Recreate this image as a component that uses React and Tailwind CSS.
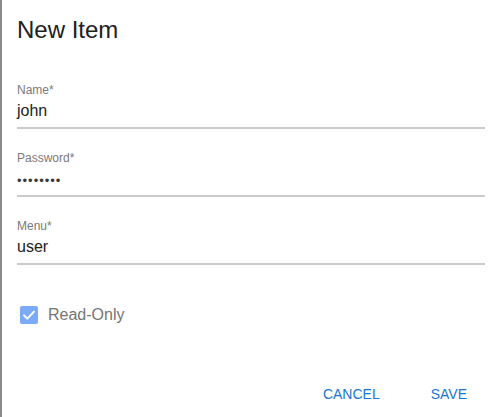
import React from "react";

function Field({ label, value, dots }) {
  return (
    <div className="flex flex-col">
      <div className="h-4 text-[12px] leading-4 text-[#7a7a7a]">{label}</div>
      <div className="mt-[3px] h-5 text-[16px] leading-5 text-[#212121]">
        {dots ? (
          <span className="text-[13px] tracking-[1px] text-[#3a3a3a] relative top-[1px]">••••••••</span>
        ) : (
          value
        )}
      </div>
      <div className="mt-[6px] h-[2px] bg-[#cbcbcb]" />
    </div>
  );
}

export default function App() {
  return (
    <div
      className="w-[499px] h-[417px] bg-white border-l-2 border-[#8a8a8a] flex flex-col pl-[15px] pr-[14px] pt-[16px]"
      style={{ fontFamily: '"Liberation Sans", Arial, Helvetica, sans-serif' }}
    >
      <div className="h-[28px] text-[24px] leading-[28px] text-[#212121]">New Item</div>
      <div className="mt-[38px] flex flex-col gap-[21px]">
        <Field label="Name*" value="john" />
        <Field label="Password*" dots />
        <Field label="Menu*" value="user" />
      </div>
      <div className="mt-[41px] flex items-center pl-[3px] h-[18px]">
        <div className="w-[18px] h-[18px] rounded-[2px] bg-[#7baaf7] flex items-center justify-center">
          <svg width="16" height="16" viewBox="0 0 24 24" fill="none">
            <path d="M4.5 12.5l5 5 10-10.5" stroke="white" strokeWidth="3" strokeLinecap="round" strokeLinejoin="round" />
          </svg>
        </div>
        <span className="ml-[10px] text-[16px] leading-[18px] text-[#757575]">Read-Only</span>
      </div>
      <div className="mt-[60px] flex justify-end gap-[51px] pr-[18px]">
        <span className="text-[14px] leading-5 text-[#1976d2]">CANCEL</span>
        <span className="text-[14px] leading-5 text-[#1976d2]">SAVE</span>
      </div>
    </div>
  );
}
